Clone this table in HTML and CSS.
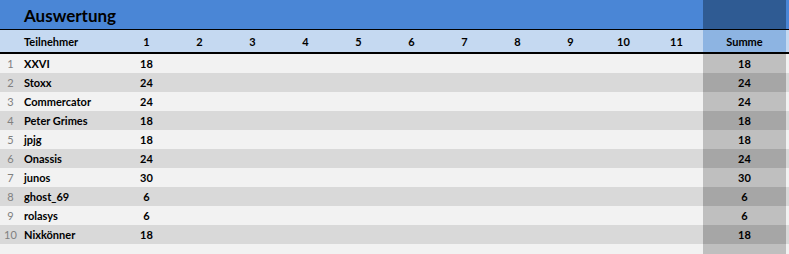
FILE: index.html
```html
<!DOCTYPE html>
<html lang="de">
<head>
<meta charset="utf-8">
<title>Auswertung</title>
<link rel="stylesheet" href="styles.css">
</head>
<body>
<div class="sheet">
  <div class="row title-row">
    <div class="cell"></div>
    <div class="cell title">Auswertung</div>
    <div class="cell"></div><div class="cell"></div><div class="cell"></div><div class="cell"></div><div class="cell"></div><div class="cell"></div><div class="cell"></div><div class="cell"></div><div class="cell"></div><div class="cell"></div><div class="cell"></div>
    <div class="cell sum"></div>
    <div class="cell"></div>
  </div>
  <div class="row head-row">
    <div class="cell"></div>
    <div class="cell name">Teilnehmer</div>
    <div class="cell num">1</div><div class="cell num">2</div><div class="cell num">3</div><div class="cell num">4</div><div class="cell num">5</div><div class="cell num">6</div><div class="cell num">7</div><div class="cell num">8</div><div class="cell num">9</div><div class="cell num">10</div><div class="cell num">11</div>
    <div class="cell num sum">Summe</div>
    <div class="cell"></div>
  </div>
  <div class="row data odd"><div class="cell idx">1</div><div class="cell name">XXVI</div><div class="cell num">18</div><div class="cell"></div><div class="cell"></div><div class="cell"></div><div class="cell"></div><div class="cell"></div><div class="cell"></div><div class="cell"></div><div class="cell"></div><div class="cell"></div><div class="cell"></div><div class="cell num sum">18</div><div class="cell"></div></div>
  <div class="row data even"><div class="cell idx">2</div><div class="cell name">Stoxx</div><div class="cell num">24</div><div class="cell"></div><div class="cell"></div><div class="cell"></div><div class="cell"></div><div class="cell"></div><div class="cell"></div><div class="cell"></div><div class="cell"></div><div class="cell"></div><div class="cell"></div><div class="cell num sum">24</div><div class="cell"></div></div>
  <div class="row data odd"><div class="cell idx">3</div><div class="cell name">Commercator</div><div class="cell num">24</div><div class="cell"></div><div class="cell"></div><div class="cell"></div><div class="cell"></div><div class="cell"></div><div class="cell"></div><div class="cell"></div><div class="cell"></div><div class="cell"></div><div class="cell"></div><div class="cell num sum">24</div><div class="cell"></div></div>
  <div class="row data even"><div class="cell idx">4</div><div class="cell name">Peter Grimes</div><div class="cell num">18</div><div class="cell"></div><div class="cell"></div><div class="cell"></div><div class="cell"></div><div class="cell"></div><div class="cell"></div><div class="cell"></div><div class="cell"></div><div class="cell"></div><div class="cell"></div><div class="cell num sum">18</div><div class="cell"></div></div>
  <div class="row data odd"><div class="cell idx">5</div><div class="cell name">jpjg</div><div class="cell num">18</div><div class="cell"></div><div class="cell"></div><div class="cell"></div><div class="cell"></div><div class="cell"></div><div class="cell"></div><div class="cell"></div><div class="cell"></div><div class="cell"></div><div class="cell"></div><div class="cell num sum">18</div><div class="cell"></div></div>
  <div class="row data even"><div class="cell idx">6</div><div class="cell name">Onassis</div><div class="cell num">24</div><div class="cell"></div><div class="cell"></div><div class="cell"></div><div class="cell"></div><div class="cell"></div><div class="cell"></div><div class="cell"></div><div class="cell"></div><div class="cell"></div><div class="cell"></div><div class="cell num sum">24</div><div class="cell"></div></div>
  <div class="row data odd"><div class="cell idx">7</div><div class="cell name">junos</div><div class="cell num">30</div><div class="cell"></div><div class="cell"></div><div class="cell"></div><div class="cell"></div><div class="cell"></div><div class="cell"></div><div class="cell"></div><div class="cell"></div><div class="cell"></div><div class="cell"></div><div class="cell num sum">30</div><div class="cell"></div></div>
  <div class="row data even"><div class="cell idx">8</div><div class="cell name">ghost_69</div><div class="cell num">6</div><div class="cell"></div><div class="cell"></div><div class="cell"></div><div class="cell"></div><div class="cell"></div><div class="cell"></div><div class="cell"></div><div class="cell"></div><div class="cell"></div><div class="cell"></div><div class="cell num sum">6</div><div class="cell"></div></div>
  <div class="row data odd"><div class="cell idx">9</div><div class="cell name">rolasys</div><div class="cell num">6</div><div class="cell"></div><div class="cell"></div><div class="cell"></div><div class="cell"></div><div class="cell"></div><div class="cell"></div><div class="cell"></div><div class="cell"></div><div class="cell"></div><div class="cell"></div><div class="cell num sum">6</div><div class="cell"></div></div>
  <div class="row data even"><div class="cell idx">10</div><div class="cell name">Nixkönner</div><div class="cell num">18</div><div class="cell"></div><div class="cell"></div><div class="cell"></div><div class="cell"></div><div class="cell"></div><div class="cell"></div><div class="cell"></div><div class="cell"></div><div class="cell"></div><div class="cell"></div><div class="cell num sum">18</div><div class="cell"></div></div>
  <div class="row data odd"><div class="cell idx"></div><div class="cell name"></div><div class="cell"></div><div class="cell"></div><div class="cell"></div><div class="cell"></div><div class="cell"></div><div class="cell"></div><div class="cell"></div><div class="cell"></div><div class="cell"></div><div class="cell"></div><div class="cell"></div><div class="cell sum"></div><div class="cell"></div></div>
</div>
</body>
</html>
```

FILE: styles.css
```css
html, body {
  margin: 0;
  padding: 0;
  background: #ffffff;
}
body {
  font-family: Lato, "Open Sans", "Liberation Sans", sans-serif;
  color: #000000;
  overflow: hidden;
}
.sheet {
  width: 789px;
}
.row {
  display: grid;
  grid-template-columns: 20px 100px repeat(11, 53px) 83px 3px;
  align-items: stretch;
}
.cell {
  display: flex;
  align-items: center;
  white-space: nowrap;
  overflow: visible;
}
.num {
  justify-content: center;
}
.title-row {
  height: 29px;
  background: #4a86d6;
  border-bottom: 1px solid #000000;
}
.title-row .sum {
  background: #2f5b93;
}
.title {
  font-size: 17px;
  font-weight: 700;
  padding-left: 4px;
  padding-top: 1px;
}
.head-row {
  height: 22px;
  background: #c5d9f1;
  border-bottom: 2px solid #000000;
  font-size: 11px;
  font-weight: 700;
}
.head-row .sum {
  background: #8db4e2;
}
.head-row .name {
  padding-left: 4px;
}
.data {
  height: 19px;
  font-size: 11px;
  font-weight: 700;
}
.data.odd {
  background: #f2f2f2;
}
.data.even {
  background: #d9d9d9;
}
.data.odd .sum {
  background: #bfbfbf;
}
.data.even .sum {
  background: #a6a6a6;
}
.data .name {
  padding-left: 4px;
}
.idx {
  justify-content: center;
  font-weight: 400;
  color: #808080;
  padding-left: 1px;
}
```
